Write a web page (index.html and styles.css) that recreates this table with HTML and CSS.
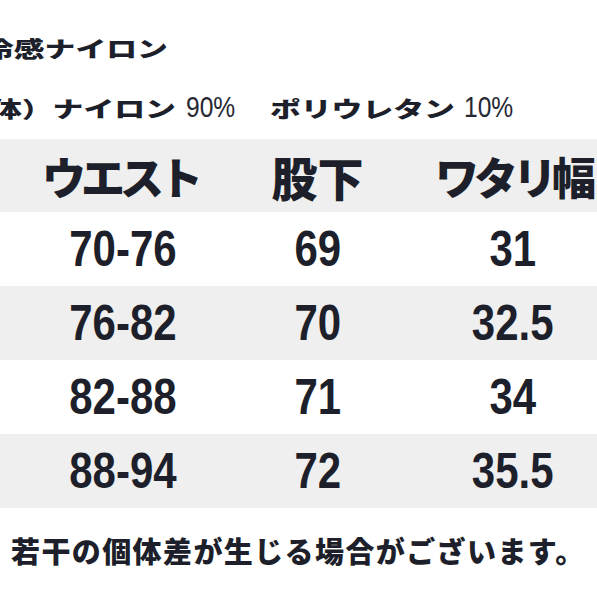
FILE: index.html
```html
<!DOCTYPE html>
<html lang="ja">
<head>
<meta charset="utf-8">
<title>サイズ表</title>
<link rel="stylesheet" href="styles.css">
</head>
<body>
<div class="page">
  <div class="spec">
    <p class="line line1"><span class="seg">冷感ナイロン</span></p>
    <p class="line line2"><span class="seg a">体）ナイロン</span><span class="pct first">90%</span><span class="seg b">ポリウレタン</span><span class="pct second">10%</span></p>
  </div>
  <div class="table">
    <div class="row head">
      <div class="cell narrow">ウエスト</div>
      <div class="cell">股下</div>
      <div class="cell narrow last">ワタリ幅</div>
    </div>
    <div class="row">
      <div class="cell"><span class="num">70-76</span></div>
      <div class="cell"><span class="num">69</span></div>
      <div class="cell"><span class="num">31</span></div>
    </div>
    <div class="row shade">
      <div class="cell"><span class="num">76-82</span></div>
      <div class="cell"><span class="num">70</span></div>
      <div class="cell"><span class="num">32.5</span></div>
    </div>
    <div class="row">
      <div class="cell"><span class="num">82-88</span></div>
      <div class="cell"><span class="num">71</span></div>
      <div class="cell"><span class="num">34</span></div>
    </div>
    <div class="row shade">
      <div class="cell"><span class="num">88-94</span></div>
      <div class="cell"><span class="num">72</span></div>
      <div class="cell"><span class="num">35.5</span></div>
    </div>
  </div>
  <p class="note">若干の個体差が生じる場合がございます。</p>
</div>
</body>
</html>
```

FILE: styles.css
```css
html, body {
  margin: 0;
  padding: 0;
  background: #ffffff;
  overflow: hidden;
}

.page {
  width: 597px;
  height: 597px;
  overflow: hidden;
  color: #1d1f2b;
  font-family: "Noto Sans CJK JP", sans-serif;
  font-weight: 900;
}

.spec {
  padding-top: 32px;
  display: flex;
  flex-direction: column;
  gap: 30px;
}

.line {
  margin: 0;
  height: 30px;
  display: flex;
  align-items: center;
  white-space: nowrap;
  font-size: 22px;
  line-height: 30px;
}

.line1 {
  margin-left: -17px;
}

.line2 {
  margin-left: -9px;
}

/* the source image is stretched horizontally */
.seg {
  display: inline-block;
  transform: scaleX(1.4);
  transform-origin: left center;
}

.seg.a {
  margin-right: 63px;
}

.seg.b {
  margin-right: 58px;
}

.pct {
  display: inline-block;
  font-family: "Liberation Sans", "Noto Sans CJK JP", sans-serif;
  font-weight: 400;
  font-size: 30px;
  transform: scaleX(0.82);
  transform-origin: left center;
  color: #262833;
}

.pct.first {
  margin-right: 24px;
}

.pct.second {
  margin-left: 4px;
}

.table {
  margin-top: 17px;
  width: 597px;
  overflow: hidden;
}

.row {
  display: grid;
  grid-template-columns: 195px 195px 195px;
  padding-left: 25px;
  width: 610px;
  height: 74px;
  align-items: center;
}

.row.head {
  height: 73px;
  background: #efefef;
}

.row.shade {
  background: #efefef;
}

.cell {
  text-align: center;
  white-space: nowrap;
}

.head .cell {
  font-size: 46px;
  line-height: 1;
}

.head .cell.narrow {
  font-size: 44px;
  letter-spacing: -5px;
  text-indent: -5px;
}

.head .cell.last {
  padding-left: 6px;
}

.num {
  display: inline-block;
  font-family: "Liberation Sans", "Noto Sans CJK JP", sans-serif;
  font-weight: 700;
  font-size: 50px;
  line-height: 1;
  transform: scaleX(0.84);
}

.note {
  margin: 22px 0 0 11px;
  font-size: 29px;
  letter-spacing: 1.4px;
  line-height: 40px;
  height: 40px;
  white-space: nowrap;
}
```
